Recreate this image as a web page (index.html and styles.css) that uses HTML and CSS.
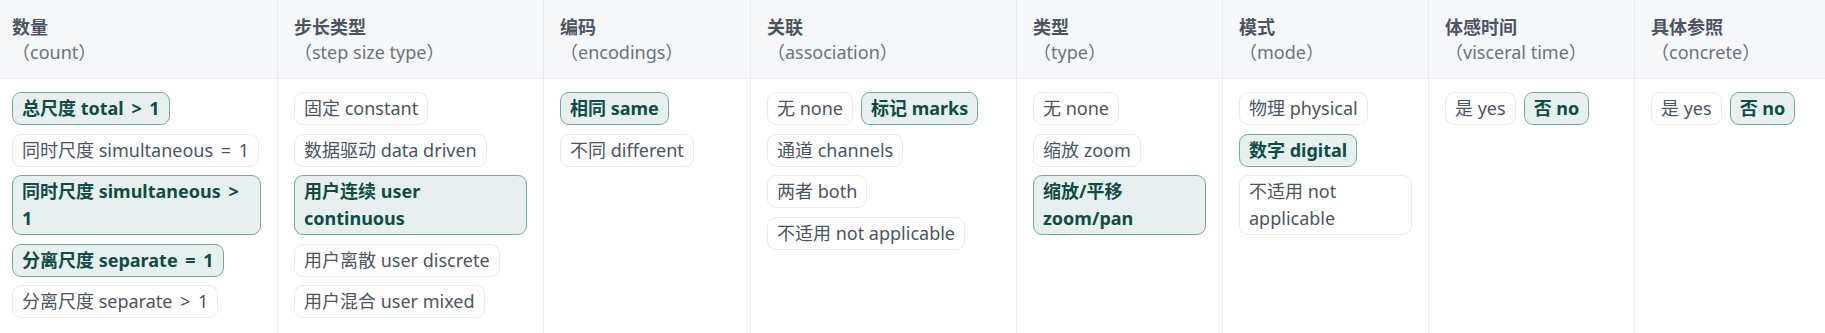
FILE: index.html
```html
<!DOCTYPE html>
<html lang="zh">
<head>
<meta charset="utf-8">
<title>Facets</title>
<link rel="stylesheet" href="styles.css">
</head>
<body>
<div class="table">
  <div class="th"><span class="zh">数量</span><span class="en">（count）</span></div>
  <div class="th"><span class="zh">步长类型</span><span class="en">（step size type）</span></div>
  <div class="th"><span class="zh">编码</span><span class="en">（encodings）</span></div>
  <div class="th"><span class="zh">关联</span><span class="en">（association）</span></div>
  <div class="th"><span class="zh">类型</span><span class="en">（type）</span></div>
  <div class="th"><span class="zh">模式</span><span class="en">（mode）</span></div>
  <div class="th"><span class="zh">体感时间</span><span class="en">（visceral time）</span></div>
  <div class="th"><span class="zh">具体参照</span><span class="en">（concrete）</span></div>

  <div class="td">
    <span class="pill on">总尺度 total <span class="op">&gt;</span> 1</span>
    <span class="pill">同时尺度 simultaneous <span class="op">=</span> 1</span>
    <span class="pill on">同时尺度 simultaneous <span class="op">&gt;</span> 1</span>
    <span class="pill on">分离尺度 separate <span class="op">=</span> 1</span>
    <span class="pill">分离尺度 separate <span class="op">&gt;</span> 1</span>
  </div>
  <div class="td">
    <span class="pill">固定 constant</span>
    <span class="pill">数据驱动 data driven</span>
    <span class="pill on">用户连续 user continuous</span>
    <span class="pill">用户离散 user discrete</span>
    <span class="pill">用户混合 user mixed</span>
  </div>
  <div class="td">
    <span class="pill on">相同 same</span>
    <span class="pill">不同 different</span>
  </div>
  <div class="td">
    <span class="pill">无 none</span>
    <span class="pill on">标记 marks</span>
    <span class="pill">通道 channels</span>
    <span class="pill">两者 both</span>
    <span class="pill">不适用 not applicable</span>
  </div>
  <div class="td">
    <span class="pill">无 none</span>
    <span class="pill">缩放 zoom</span>
    <span class="pill on">缩放/平移 zoom/pan</span>
  </div>
  <div class="td">
    <span class="pill">物理 physical</span>
    <span class="pill on">数字 digital</span>
    <span class="pill">不适用 not applicable</span>
  </div>
  <div class="td">
    <span class="pill">是 yes</span>
    <span class="pill on">否 no</span>
  </div>
  <div class="td">
    <span class="pill">是 yes</span>
    <span class="pill on">否 no</span>
  </div>
</div>
</body>
</html>
```
FILE: styles.css
```css
html, body {
  margin: 0;
  padding: 0;
  background: #ffffff;
}

body {
  font-family: "Noto Sans", "Noto Sans CJK SC", sans-serif;
  font-size: 18px;
  color: #4b5563;
}

.table {
  display: grid;
  grid-template-columns: 278px 266px 207px 266px 206px 206px 206px 1fr;
  min-height: 333px;
  grid-template-rows: 79px 1fr;
}

.th {
  background: #f6f7f9;
  border-right: 1px solid #e8eaee;
  border-bottom: 1px solid #e8eaee;
  padding: 13px 16px 0;
  line-height: 26px;
  display: flex;
  flex-direction: column;
  align-items: flex-start;
}

.th .zh {
  font-family: "Noto Sans CJK SC", sans-serif;
  font-weight: 700;
  color: #4b5563;
}

.th .en {
  color: #6b7280;
  font-weight: 400;
}

.td {
  border-right: 1px solid #eceef1;
  padding: 13px 16px 14px;
  display: flex;
  flex-wrap: wrap;
  align-content: flex-start;
  align-items: flex-start;
  gap: 8.5px 8px;
}

.th:first-child,
.td:nth-child(9) {
  padding-left: 12px;
}

.th:nth-child(8),
.td:last-child {
  border-right: none;
}

.pill {
  display: inline-block;
  max-width: 100%;
  box-sizing: border-box;
  border: 1px solid #e9ebee;
  border-radius: 9px;
  padding: 2px 9px;
  line-height: 27px;
  background: #ffffff;
  color: #4b5563;
}

.pill .op {
  padding: 0 3px;
}

.pill.on {
  background: #e7f0ee;
  border-color: #72aaa1;
  color: #0e4d46;
  font-weight: 700;
}
```
